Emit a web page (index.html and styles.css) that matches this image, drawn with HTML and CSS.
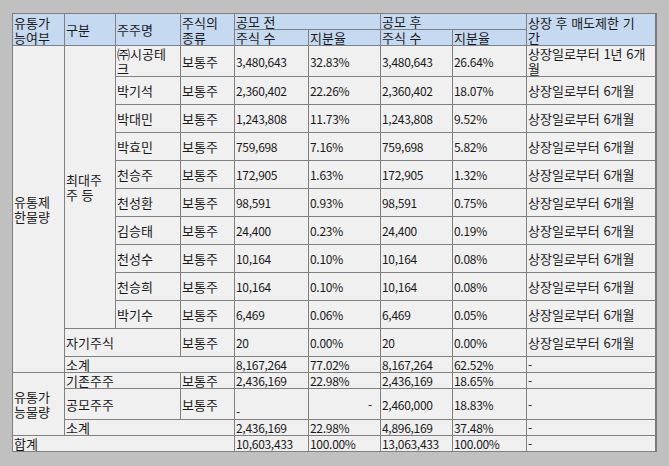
FILE: index.html
```html
<!DOCTYPE html>
<html lang="ko">
<head>
<meta charset="utf-8">
<link rel="stylesheet" href="styles.css">
</head>
<body>
<div class="wrap">
<table class="grid">
<colgroup>
<col class="c1"><col class="c2"><col class="c3"><col class="c4"><col class="c5"><col class="c6"><col class="c7"><col class="c8"><col class="c9">
</colgroup>
<thead>
<tr class="h1">
<th rowspan="2">유통가<br>능여부</th>
<th rowspan="2">구분</th>
<th rowspan="2">주주명</th>
<th rowspan="2">주식의<br>종류</th>
<th colspan="2">공모 전</th>
<th colspan="2">공모 후</th>
<th rowspan="2">상장 후 매도제한 기<br>간</th>
</tr>
<tr class="h2">
<th>주식 수</th><th>지분율</th><th>주식 수</th><th>지분율</th>
</tr>
</thead>
<tbody>
<tr class="r2l">
<td rowspan="12">유통제<br>한물량</td>
<td rowspan="10">최대주<br>주 등</td>
<td>㈜시공테<br>크</td><td>보통주</td><td class="n">3,480,643</td><td class="n">32.83%</td><td class="n">3,480,643</td><td class="n">26.64%</td><td>상장일로부터 1년 6개<br>월</td>
</tr>
<tr class="r"><td>박기석</td><td>보통주</td><td class="n">2,360,402</td><td class="n">22.26%</td><td class="n">2,360,402</td><td class="n">18.07%</td><td>상장일로부터 6개월</td></tr>
<tr class="r"><td>박대민</td><td>보통주</td><td class="n">1,243,808</td><td class="n">11.73%</td><td class="n">1,243,808</td><td class="n">9.52%</td><td>상장일로부터 6개월</td></tr>
<tr class="r"><td>박효민</td><td>보통주</td><td class="n">759,698</td><td class="n">7.16%</td><td class="n">759,698</td><td class="n">5.82%</td><td>상장일로부터 6개월</td></tr>
<tr class="r"><td>천승주</td><td>보통주</td><td class="n">172,905</td><td class="n">1.63%</td><td class="n">172,905</td><td class="n">1.32%</td><td>상장일로부터 6개월</td></tr>
<tr class="r"><td>천성환</td><td>보통주</td><td class="n">98,591</td><td class="n">0.93%</td><td class="n">98,591</td><td class="n">0.75%</td><td>상장일로부터 6개월</td></tr>
<tr class="r"><td>김승태</td><td>보통주</td><td class="n">24,400</td><td class="n">0.23%</td><td class="n">24,400</td><td class="n">0.19%</td><td>상장일로부터 6개월</td></tr>
<tr class="r"><td>천성수</td><td>보통주</td><td class="n">10,164</td><td class="n">0.10%</td><td class="n">10,164</td><td class="n">0.08%</td><td>상장일로부터 6개월</td></tr>
<tr class="r"><td>천승희</td><td>보통주</td><td class="n">10,164</td><td class="n">0.10%</td><td class="n">10,164</td><td class="n">0.08%</td><td>상장일로부터 6개월</td></tr>
<tr class="r"><td>박기수</td><td>보통주</td><td class="n">6,469</td><td class="n">0.06%</td><td class="n">6,469</td><td class="n">0.05%</td><td>상장일로부터 6개월</td></tr>
<tr class="r"><td colspan="2">자기주식</td><td>보통주</td><td class="n">20</td><td class="n">0.00%</td><td class="n">20</td><td class="n">0.00%</td><td>상장일로부터 6개월</td></tr>
<tr class="s"><td colspan="3">소계</td><td class="n">8,167,264</td><td class="n">77.02%</td><td class="n">8,167,264</td><td class="n">62.52%</td><td class="n">-</td></tr>
<tr class="s">
<td rowspan="3">유통가<br>능물량</td>
<td colspan="2">기존주주</td><td>보통주</td><td class="n">2,436,169</td><td class="n">22.98%</td><td class="n">2,436,169</td><td class="n">18.65%</td><td class="n">-</td>
</tr>
<tr class="r2"><td colspan="2">공모주주</td><td>보통주</td><td class="n bot">-</td><td class="n rt">-</td><td class="n">2,460,000</td><td class="n">18.83%</td><td class="n">-</td></tr>
<tr class="s"><td colspan="3">소계</td><td class="n">2,436,169</td><td class="n">22.98%</td><td class="n">4,896,169</td><td class="n">37.48%</td><td class="n">-</td></tr>
<tr class="s"><td colspan="4">합계</td><td class="n">10,603,433</td><td class="n">100.00%</td><td class="n">13,063,433</td><td class="n">100.00%</td><td class="n">-</td></tr>
</tbody>
</table>
</div>
</body>
</html>
```

FILE: styles.css
```css
html, body {
  margin: 0;
  padding: 0;
  background: #c0c0c0;
}
.wrap {
  padding: 13px 0 0 12px;
}
.grid {
  border-collapse: collapse;
  table-layout: fixed;
  width: 644px;
  font-family: "Noto Sans CJK KR", "Noto Sans", sans-serif;
  font-size: 13px;
  line-height: 15px;
  color: #1a1a1a;
  background: #f0f0f0;
  border-top: 1px solid #000;
  border-left: 1px solid #000;
  border-bottom: 1px solid #000;
  border-right: 2px solid #7a7a7a;
}
.c1 { width: 52px; }
.c2 { width: 51px; }
.c3 { width: 65px; }
.c4 { width: 54px; }
.c5 { width: 74px; }
.c6 { width: 72px; }
.c7 { width: 72px; }
.c8 { width: 74px; }
.c9 { width: 129px; }
.grid th,
.grid td {
  border: 1px solid #808080;
  padding: 0 0 0 1px;
  text-align: left;
  vertical-align: middle;
  font-weight: normal;
  white-space: nowrap;
  overflow: hidden;
}
.grid th {
  background: #c5d9f1;
}
.grid td.n {
  font-size: 12px;
  letter-spacing: -0.3px;
}
.h1 th, .h2 th { height: 15px; }
.r2l td { height: 30px; }
.r td { height: 27px; }
.s td { height: 15px; }
.r2 td { height: 30px; }
.grid td.bot { vertical-align: bottom; }
.grid td.rt { text-align: right; padding-right: 8px; }
```
